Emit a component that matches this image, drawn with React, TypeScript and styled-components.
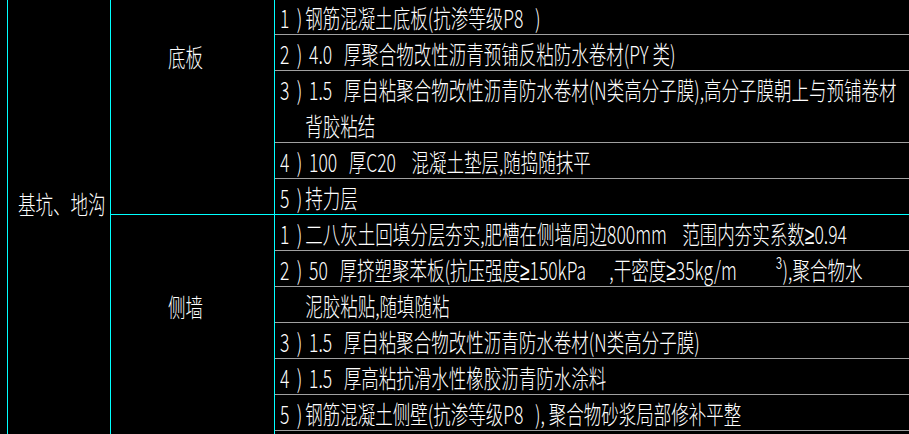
import React from "react";
import styled, { createGlobalStyle } from "styled-components";

const CYAN = "#00ffff";
const RULE = "#a0a0a0";

const GlobalStyle = createGlobalStyle`
  html, body {
    margin: 0;
    padding: 0;
    background: #000;
    overflow: hidden;
  }
  body {
    font-family: "Noto Sans CJK SC", "Liberation Sans", sans-serif;
    color: #fff;
  }
`;

type Item = { no?: string; lines: string[] };

const bottomSlab: Item[] = [
  { no: "1", lines: ["钢筋混凝土底板(抗渗等级P8   )"] },
  { no: "2", lines: [" 4.0   厚聚合物改性沥青预铺反粘防水卷材(PY 类)"] },
  {
    no: "3",
    lines: [
      " 1.5   厚自粘聚合物改性沥青防水卷材(N类高分子膜),高分子膜朝上与预铺卷材",
      "背胶粘结",
    ],
  },
  { no: "4", lines: [" 100   厚C20    混凝土垫层,随捣随抹平"] },
  { no: "5", lines: ["持力层"] },
];

const sideWall: Item[] = [
  { no: "1", lines: ["二八灰土回填分层夯实,肥槽在侧墙周边800mm    范围内夯实系数≥0.94"] },
  { no: "2", lines: [" 50   厚挤塑聚苯板(抗压强度≥150kPa      ,干密度≥35kg/m          ³),聚合物水"] },
  { lines: ["泥胶粘贴,随填随粘"] },
  { no: "3", lines: [" 1.5   厚自粘聚合物改性沥青防水卷材(N类高分子膜)"] },
  { no: "4", lines: [" 1.5   厚高粘抗滑水性橡胶沥青防水涂料"] },
  { no: "5", lines: ["钢筋混凝土侧壁(抗渗等级P8   ), 聚合物砂浆局部修补平整"] },
  { lines: [""] },
];

const Sheet = styled.div`
  display: flex;
  margin-left: 7px;
  height: 434px;
  overflow: hidden;
`;

const GroupCell = styled.div`
  box-sizing: border-box;
  width: 104px;
  flex: none;
  border-left: 1px solid ${CYAN};
  border-right: 1px solid ${CYAN};
  padding: 185px 0 0 10px;
`;

const Body = styled.div`
  flex: 1;
  min-width: 0;
  display: flex;
  flex-direction: column;
`;

const Section = styled.div<{ $closed?: boolean }>`
  display: grid;
  grid-template-columns: 164px 1fr;
  border-bottom: ${(p) => (p.$closed ? `1px solid ${CYAN}` : "none")};
  flex: ${(p) => (p.$closed ? "none" : "1")};
`;

const PartCell = styled.div<{ $top: number }>`
  box-sizing: border-box;
  border-right: 1px solid ${CYAN};
  padding: ${(p) => p.$top}px 0 0 57px;
`;

const Rows = styled.div`
  display: flex;
  flex-direction: column;
  min-width: 0;
`;

const Row = styled.div<{ $lines: number; $trim?: boolean }>`
  box-sizing: border-box;
  flex: none;
  height: ${(p) => p.$lines * 36 - (p.$trim ? 1 : 0)}px;
  border-bottom: 1px solid ${RULE};
  padding-left: 5px;
  display: grid;
  grid-auto-rows: 1fr;
  row-gap: 1px;

  &:last-child {
    border-bottom: none;
    height: ${(p) => p.$lines * 36 - 1}px;
  }
`;

const Line = styled.div`
  display: flex;
  align-items: center;
  white-space: nowrap;
  min-height: 0;
`;

const LabelLine = styled.div`
  height: 35px;
  display: flex;
  align-items: center;
  white-space: nowrap;
`;

const CadText = styled.span`
  display: inline-block;
  font-size: 25px;
  font-weight: 300;
  white-space: pre;
  transform: scaleX(0.7);
  transform-origin: 0 50%;
`;

const Sym = styled.span`
  font-family: "Liberation Sans", sans-serif;
`;

const Num = styled.span`
  display: inline-block;
  width: 24px;
`;

const Paren = styled.span`
  display: inline-block;
  width: 12px;
`;

function cad(text: string) {
  return text
    .split(/(≥)/)
    .map((part, i) => (part === "≥" ? <Sym key={i}>≥</Sym> : part));
}

function ItemRow({ item, trim }: { item: Item; trim?: boolean }) {
  return (
    <Row $lines={item.lines.length} $trim={trim}>
      {item.lines.map((text, i) => (
        <Line key={i}>
          <CadText>
            <Num>{i === 0 && item.no ? item.no : ""}</Num>
            <Paren>{i === 0 && item.no ? ")" : ""}</Paren>
            {cad(text)}
          </CadText>
        </Line>
      ))}
    </Row>
  );
}

export default function App() {
  return (
    <>
      <GlobalStyle />
      <Sheet>
        <GroupCell>
          <LabelLine>
            <CadText>基坑、地沟</CadText>
          </LabelLine>
        </GroupCell>
        <Body>
          <Section $closed>
            <PartCell $top={38}>
              <LabelLine>
                <CadText>底板</CadText>
              </LabelLine>
            </PartCell>
            <Rows>
              {bottomSlab.map((item, i) => (
                <ItemRow key={i} item={item} trim={i === 0} />
              ))}
            </Rows>
          </Section>
          <Section>
            <PartCell $top={73}>
              <LabelLine>
                <CadText>侧墙</CadText>
              </LabelLine>
            </PartCell>
            <Rows>
              {sideWall.map((item, i) => (
                <ItemRow key={i} item={item} />
              ))}
            </Rows>
          </Section>
        </Body>
      </Sheet>
    </>
  );
}
